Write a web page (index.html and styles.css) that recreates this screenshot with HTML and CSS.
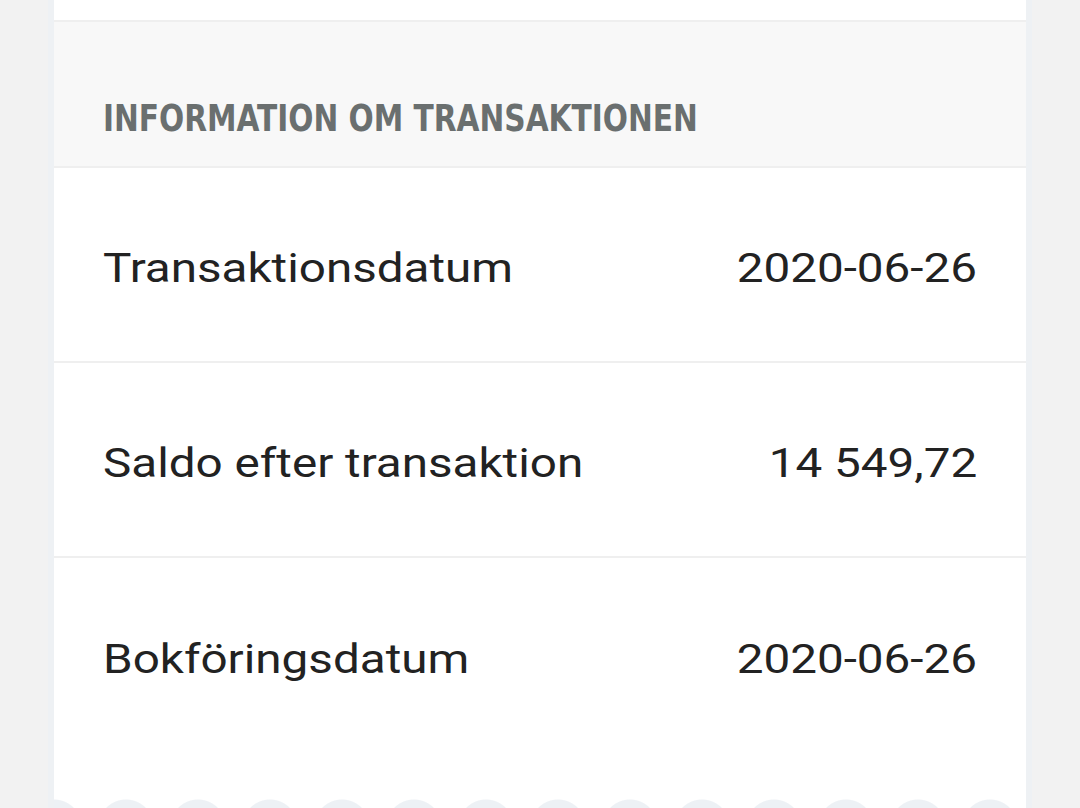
FILE: index.html
```html
<!DOCTYPE html>
<html>
<head>
    <meta charset="UTF-8">
    <title>Transaktion</title>
    <link rel="stylesheet" href="styles.css">
</head>
<body>

    <div class="receipt">

        <div class="receipt-top"></div>

        <div class="section-head">
            <span class="section-title">Information om transaktionen</span>
        </div>

        <div class="info-row">
            <span class="label">Transaktionsdatum</span>
            <span class="value">2020-06-26</span>
        </div>

        <div class="info-row">
            <span class="label">Saldo efter transaktion</span>
            <span class="value">14 549,72</span>
        </div>

        <div class="info-row last">
            <span class="label">Bokföringsdatum</span>
            <span class="value">2020-06-26</span>
        </div>

        <div class="receipt-foot"></div>
        <div class="receipt-edge"></div>

    </div>

</body>
</html>
```

FILE: styles.css
```css
body {
    margin: 0;
    background-color: #f2f2f2;
    font-family: Roboto, "Liberation Sans", sans-serif;
}

.receipt {
    margin: 0 54px;
    background-color: white;
    box-shadow: -6px 0 0 #eef1f4, 6px 0 0 #eef1f4;
    height: 808px;
    display: flex;
    flex-direction: column;
}

.receipt-top {
    height: 20px;
    border-bottom: 2px solid #efefef;
}

.section-head {
    height: 146px;
    box-sizing: border-box;
    padding: 77px 0 0 49px;
    background-color: #f8f8f8;
    border-bottom: 2px solid #efefef;
}

.section-title {
    display: inline-block;
    color: #6a6f6f;
    font-family: "DejaVu Sans Condensed", "DejaVu Sans", sans-serif;
    font-weight: bold;
    font-size: 38px;
    line-height: 1;
    text-transform: uppercase;
    transform: scaleX(0.867);
    transform-origin: left center;
}

.info-row {
    height: 195px;
    box-sizing: border-box;
    padding: 8px 49px 0;
    display: flex;
    align-items: center;
    justify-content: space-between;
    border-bottom: 2px solid #efefef;
    font-size: 40px;
    color: #222;
}

.info-row.last {
    border-bottom: none;
}

.label, .value {
    display: inline-block;
    transform: scaleX(1.19);
}

.label {
    transform-origin: left center;
}

.value {
    transform-origin: right center;
}

.receipt-foot {
    flex: 1;
}

.receipt-edge {
    height: 10px;
    background-image: radial-gradient(circle at 36px 29px, #edf1f5 27px, transparent 28px);
    background-size: 72px 100%;
    background-position: -36px 0;
}
```
